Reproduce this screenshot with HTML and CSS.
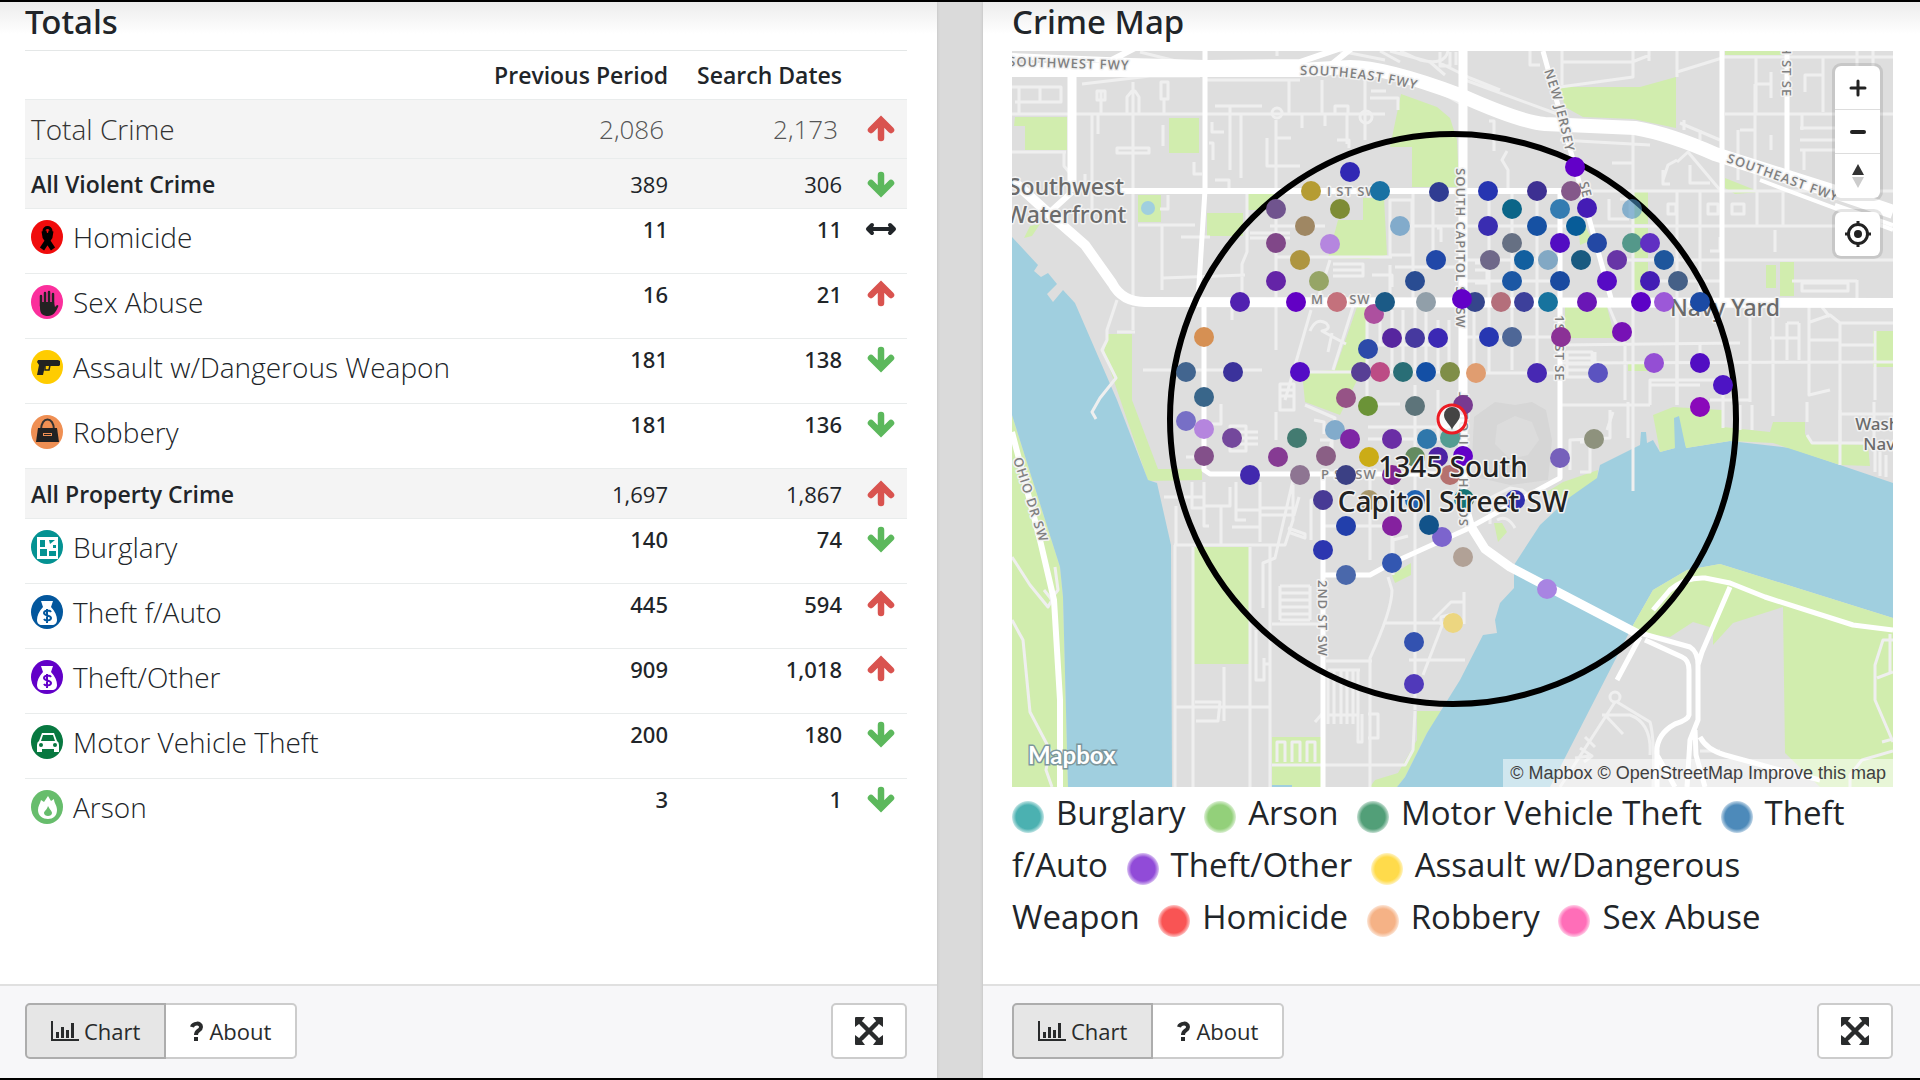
FILE: index.html
```html
<!DOCTYPE html>
<html lang="en">
<head>
    <meta charset="UTF-8">
    <meta name="viewport" content="width=device-width, initial-scale=1.0">
    <title>Crime Cards</title>
    <link rel="stylesheet" href="styles.css">
</head>

<body>
    <!-- Shared icons -->
    <svg class="sprite" width="0" height="0" aria-hidden="true">
        <symbol id="up" viewBox="0 0 28 28">
            <path d="M14 23V7M4 15L14 5l10 10" fill="none" stroke="currentColor" stroke-width="6.500" stroke-linecap="round"/>
        </symbol>
        <symbol id="down" viewBox="0 0 28 28">
            <path d="M14 5v16M4 13l10 10 10-10" fill="none" stroke="currentColor" stroke-width="6.500" stroke-linecap="round"/>
        </symbol>
        <symbol id="same" viewBox="0 0 32 28">
            <path d="M4 14h24M7 10l-4 4 4 4M25 10l4 4-4 4" fill="none" stroke="currentColor" stroke-width="4" stroke-linecap="round" stroke-linejoin="round"/>
        </symbol>
        <symbol id="bars" viewBox="0 0 28 24">
            <path d="M0 2h2v18h26v2H0zM5 13h3v6H5zM10 8h3v11h-3zM15 11h3v8h-3zM20 4h3v15h-3z" fill="currentColor"/>
        </symbol>
        <symbol id="question" viewBox="0 0 14 24">
            <path d="M2 8c1-4 9-5 9 0 0 4-5 3-5 8" fill="none" stroke="currentColor" stroke-width="4"/>
            <path d="M4 18h4v4H4z" fill="currentColor"/>
        </symbol>
        <symbol id="expand" viewBox="0 0 28 28">
            <path d="M6 6l16 16M22 6L6 22" stroke="currentColor" stroke-width="4.500"/>
            <path d="M0 1q0-1 1-1h9L7 4l1 4-4-1-4 3zM28 1q0-1-1-1h-9l3 4-1 4 4-1 4 3zM0 27q0 1 1 1h9l-3-4 1-4-4 1-4-3zM28 27q0 1-1 1h-9l3-4-1-4 4 1 4-3z" fill="currentColor"/>
        </symbol>
        <symbol id="bag" viewBox="0 0 32 34">
            <path d="M10 6h12l-2 6c4 4 6 9 6 13 0 3-2 5-5 5H11c-3 0-5-2-5-5 0-4 2-9 6-13z" fill="#fff"/>
            <path d="M20 17c-1-2-7-2-7 1s7 2 7 5-6 3-7 1M16 14v14" fill="none" stroke="currentColor" stroke-width="2"/>
        </symbol>
    </svg>

    <section class="panel">
        <div class="panel-body">
            <h2 class="ruled">Totals</h2>
            <table class="totals">
                <thead>
                    <tr>
                        <th class="name"></th>
                        <th class="previous">Previous Period</th>
                        <th>Search Dates</th>
                        <th class="trend"></th>
                    </tr>
                </thead>
                <tbody>
                    <tr class="total">
                        <td class="name">Total Crime</td><td>2,086</td><td>2,173</td>
                        <td class="trend"><svg class="red"><use href="#up"/></svg></td>
                    </tr>
                    <tr class="group">
                        <td class="name">All Violent Crime</td><td>389</td><td>306</td>
                        <td class="trend"><svg class="green"><use href="#down"/></svg></td>
                    </tr>
                    <tr class="offense">
                        <td class="name"><span class="offense-name"><svg class="badge" viewBox="0 0 32 34"><ellipse cx="16" cy="17" rx="16" ry="17" fill="#f00c0c"/><path d="M11 29L19 17l1-6M22 29L14 17l-1-6" stroke="#000" stroke-width="5" fill="none"/><circle cx="16.500" cy="11" r="3.500" fill="none" stroke="#000" stroke-width="3"/></svg>Homicide</span></td><td>11</td><td>11</td>
                        <td class="trend"><svg class="same"><use href="#same"/></svg></td>
                    </tr>
                    <tr class="offense">
                        <td class="name"><span class="offense-name"><svg class="badge" viewBox="0 0 32 34"><ellipse cx="16" cy="17" rx="16" ry="17" fill="#fb2f9c"/><path d="M10 21V11M14 18V8M18 18V7M22 18V9" stroke="#222" stroke-width="2.500" stroke-linecap="round"/><path d="M9 17h14l1 5 2-2q2 0 1 2c-2 5-5 9-10 9-5 0-8-2-8-8z" fill="#222"/></svg>Sex Abuse</span></td><td>16</td><td>21</td>
                        <td class="trend"><svg class="red"><use href="#up"/></svg></td>
                    </tr>
                    <tr class="offense">
                        <td class="name"><span class="offense-name"><svg class="badge" viewBox="0 0 32 34"><ellipse cx="16" cy="17" rx="16" ry="17" fill="#fc0"/><path d="M6 12l1-2h20l2 1v4l-1 1H14l-2 9H6l2-10z" fill="#222"/><path d="M14 16v4h4l1-5" fill="none" stroke="#222" stroke-width="1.500"/></svg>Assault w/Dangerous Weapon</span></td><td>181</td><td>138</td>
                        <td class="trend"><svg class="green"><use href="#down"/></svg></td>
                    </tr>
                    <tr class="offense">
                        <td class="name"><span class="offense-name"><svg class="badge" viewBox="0 0 32 34"><ellipse cx="16" cy="17" rx="16" ry="17" fill="#ef8f53"/><path d="M10 15c0-14 13-14 13 0" fill="none" stroke="#333" stroke-width="2"/><path d="M7 13h19l2 14H5z" fill="#222"/><path d="M12 18h9v3h-9z" fill="#ef8f53"/><path d="M13 19h7v1h-7z" fill="#222"/></svg>Robbery</span></td><td>181</td><td>136</td>
                        <td class="trend"><svg class="green"><use href="#down"/></svg></td>
                    </tr>
                    <tr class="group">
                        <td class="name">All Property Crime</td><td>1,697</td><td>1,867</td>
                        <td class="trend"><svg class="red"><use href="#up"/></svg></td>
                    </tr>
                    <tr class="offense">
                        <td class="name"><span class="offense-name"><svg class="badge" viewBox="0 0 32 34"><ellipse cx="16" cy="17" rx="16" ry="17" fill="#049292"/><path d="M6 7h21v22H6z" fill="#fff"/><path d="M9 10h5v7H9zM9 19h7v7H9zM18 10h6l-5 4zM18 21h7v5h-7zM22 15h3v3h-3z" fill="#049292"/></svg>Burglary</span></td><td>140</td><td>74</td>
                        <td class="trend"><svg class="green"><use href="#down"/></svg></td>
                    </tr>
                    <tr class="offense">
                        <td class="name"><span class="offense-name"><svg class="badge blue" viewBox="0 0 32 34"><ellipse cx="16" cy="17" rx="16" ry="17" fill="currentColor"/><use href="#bag"/></svg>Theft f/Auto</span></td><td>445</td><td>594</td>
                        <td class="trend"><svg class="red"><use href="#up"/></svg></td>
                    </tr>
                    <tr class="offense">
                        <td class="name"><span class="offense-name"><svg class="badge purple" viewBox="0 0 32 34"><ellipse cx="16" cy="17" rx="16" ry="17" fill="currentColor"/><use href="#bag"/></svg>Theft/Other</span></td><td>909</td><td>1,018</td>
                        <td class="trend"><svg class="red"><use href="#up"/></svg></td>
                    </tr>
                    <tr class="offense">
                        <td class="name"><span class="offense-name"><svg class="badge" viewBox="0 0 32 34"><ellipse cx="16" cy="17" rx="16" ry="17" fill="#077840"/><path d="M11 8h12l3 8q2 1 2 4v7h-5v-3H11v3H6v-7q0-3 2-4zM12 10l-2 6h14l-2-6z" fill="#fff" fill-rule="evenodd"/><circle cx="10" cy="20" r="2" fill="#077840"/><circle cx="24" cy="20" r="2" fill="#077840"/></svg>Motor Vehicle Theft</span></td><td>200</td><td>180</td>
                        <td class="trend"><svg class="green"><use href="#down"/></svg></td>
                    </tr>
                    <tr class="offense">
                        <td class="name"><span class="offense-name"><svg class="badge" viewBox="0 0 32 34"><ellipse cx="16" cy="17" rx="16" ry="17" fill="#67bd6c"/><path d="M17 6l3 5 3-2c0 4 3 6 3 11 0 6-4 9-9 9S7 26 7 20c0-4 2-6 3-10l3 2z" fill="#fff"/><path d="M17 16c2 4 4 5 4 7s-2 3-4 3-4-1-4-3 3-3 4-7z" fill="#67bd6c"/></svg>Arson</span></td><td>3</td><td>1</td>
                        <td class="trend"><svg class="green"><use href="#down"/></svg></td>
                    </tr>
                </tbody>
            </table>
        </div>
        <div class="panel-footer">
            <div class="btn-group">
                <button class="btn active" type="button"><svg class="bars"><use href="#bars"/></svg> Chart</button>
                <button class="btn" type="button"><svg class="question"><use href="#question"/></svg> About</button>
            </div>
            <button class="btn btn-expand" type="button" aria-label="Expand"><svg><use href="#expand"/></svg></button>
        </div>
    </section>

    <section class="panel panel-map">
        <div class="panel-body">
            <h2>Crime Map</h2>
            <div class="map">
                <svg class="map-canvas" viewBox="1012 51 881 736" role="img" aria-label="Crime near 1345 South Capitol Street SW">
                    <rect class="land" x="1012" y="51" width="881" height="736"/>

                    <!-- Parks -->
                    <g class="park">
                        <path d="M1012 415L1060 567L1063 597L1068 787H1012z"/>
                        <path d="M1108 334H1132V400L1158 469H1202V480L1148 481L1104 352z"/>
                        <path d="M1015 117H1067V150H1025V126H1014z"/>
                        <path d="M1169 118h30v35h-30zM1138 195h23v27h-23zM1207 213h36v23h-36z"/>
                        <path d="M1024 238l6-12 10-2-8 12zM1247 194h28l-13 16h-15z"/>
                        <path d="M1401 94L1437 107L1450 118L1457 140L1459 187H1412V147H1390z"/>
                        <path d="M1363 198H1384L1387 255L1368 259L1328 258L1338 220H1363z"/>
                        <path d="M1357 307H1367V360L1340 415L1305 402L1302 372L1335 370z"/>
                        <path d="M1560 87H1640L1676 77V128L1633 119L1583 117L1565 107z"/>
                        <path d="M1725 51h57v4h-57zM1725 178L1760 192L1735 194L1725 188z"/>
                        <path d="M1634 192h14v32h-14zM1634 228h14v30h-14zM1634 262h14v28h-14z"/>
                        <path d="M1780 262h14v34h-14zM1766 265h10v23h-10zM1873 331h20v36h-20zM1628 364h20v7h-20z"/>
                        <path d="M1565 307H1607L1615 338H1565zM1579 230L1585 225L1592 240L1580 245z"/>
                        <path d="M1194 547h55v117h-55zM1272 737h51v50h-51z"/>
                        <path d="M1417 711H1443L1427 733L1405 777L1397 787H1370L1375 780L1398 773L1417 740z"/>
                        <path d="M1494 523h8l5 9-9 10zM1392 575L1411 563V575L1395 583z"/>
                        <path d="M1547 492L1563 482L1598 470L1597 480L1557 507z"/>
                    </g>

                    <!-- Ballpark -->
                    <path d="M1474 417L1495 402L1515 405L1532 402L1546 410L1552 440L1548 480L1510 485L1480 478L1472 460z" fill="#d6d6d6"/>
                    <path d="M1497 425L1515 416L1532 422L1539 440L1528 455L1510 459L1495 444z" fill="#dcdcdc"/>

                    <!-- Rivers -->
                    <g class="water">
                        <path d="M1012 237L1038 265L1034 271L1041 277L1048 273L1057 284L1047 294L1053 302L1063 290L1075 303L1117 400L1148 480L1157 483L1171 545L1172 787H1068L1063 597L1060 567L1012 415z"/>
                        <path d="M1600 465L1640 445L1641 432H1646L1647 443L1653 440L1660 452L1675 448L1677 417L1686 448L1730 441L1790 448L1893 483V618L1720 564L1687 570L1653 590L1632 627L1550 787H1397L1405 777L1427 733L1460 680L1483 635L1497 633L1495 620L1500 603L1514 588V565L1540 525L1570 497L1597 478z"/>
                        <circle cx="1148" cy="208" r="7"/>
                        <path d="M1272 785h20v2h-20z"/>
                    </g>
                    <g class="park">
                        <path d="M1653 415L1673 407L1722 410L1723 427L1770 432L1773 422H1805V434L1812 443L1868 445L1870 466L1840 465L1773 443L1730 441L1686 448L1677 417L1675 448L1660 452z"/>
                        <path d="M1632 627L1653 590L1687 570L1720 564L1893 618V787H1820L1785 753L1783 607L1733 623L1713 645V628L1693 622L1670 637L1640 633z"/>
                    </g>
                    <path class="water" d="M1674 418L1679 416L1686 449L1675 450z"/>

                    <!-- Side streets -->
                    <g class="street">
                        <path d="M1012 114H1385M1012 87H1061V102H1015M1040 87V102M1019 87V114M1012 152H1066M1082 84L1150 76H1200M1101 92V114M1097 91h8v9h-8zM1127 114V97l5-6h3l4 6v17M1161 82h7v17h-7zM1164 99v15M1092 114V210M1098 114V134M1133 82V290M1133 114V300M1163 125V146M1117 148h32v5h-32zM1064 152v14l10 12M1085 192v-18M1168 195v14h-8M1138 225H1195M1162 225V290M1133 225v3M1181 237H1210"/>
                        <path d="M1207 80H1300M1215 106H1262M1230 106V170M1241 114v64M1212 122v10h12M1209 143h4v17M1194 162v12h8M1215 180h14v12M1289 80V114M1322 80V114M1335 114V106h13v8M1365 70V140M1370 98H1398V110M1371 91H1386M1347 114v30M1302 114v14M1325 114v12M1276 120V350M1276 138H1291M1267 138V166H1300M1337 140h12v8"/>
                        <circle cx="1277" cy="113" r="5"/><circle cx="1366" cy="117" r="6"/>
                        <path d="M1247 192v60l-5 12v38M1163 278L1245 275M1270 226H1325M1250 233h40M1250 238h40M1276 257H1392M1390 265V300M1372 275h20v12M1330 260L1317 302M1333 264h30v12h-30M1333 270h30M1390 200h22v55h-22zM1390 226H1460M1413 192V300M1433 192V256M1395 267H1455M1437 228h4v14"/>
                        <path d="M1117 300L1107 330V340L1102 350L1116 378L1100 398L1092 412L1096 419M1117 332h18M1133 307V330M1143 370H1262M1232 302v18M1311 310L1285 400M1303 360M1353 307L1333 370M1310 331q6-14 16-8q6 6-4 8L1346 344M1332 333L1328 352M1276 412V440M1280 384h14v26h-14zM1280 390h14M1280 396h14"/>
                        <path d="M1367 320V400M1380 310V345M1392 310V370M1403 310V370M1415 302V370M1426 310V370M1438 320V370M1449 320V370M1303 372H1463M1375 345H1450M1368 404H1400M1368 427H1455M1368 439H1455M1415 385V475M1438 390V440M1305 405L1335 418L1330 450M1314 420l10 2v12M1320 440h12v14"/>
                        <path d="M1221 404v20h-14M1230 426h16v25h-16zM1230 432h28M1230 438h28M1230 444h28M1186 457H1204"/>
                        <path d="M1164 497H1204M1174 545H1285L1293 520V485M1176 506v38M1192 482v26h12V482M1230 487V506H1204v20h5M1221 506V545M1236 482v38h10M1236 510h24M1260 482v60M1232 527h28M1260 508H1294M1293 480l-18 78-12 5v45M1288 532l17 6v-4l-17-6M1260 515h34l5-18M1323 500h-12v40"/>
                        <path d="M1175 545V787M1193 547V787M1250 547V787M1270 545V787M1174 707H1270M1195 702h25l-2 19h-22M1224 667v54M1256 630V680h8v-22M1263 664h8M1280 586h30M1280 593h30M1280 600h30M1280 607h30M1280 614h30M1280 620h30M1280 586v34M1310 586v34M1272 624H1323M1326 661H1372M1272 765H1405L1413 750L1415 711"/>
                        <path d="M1277 762V742h8v20M1292 762V742h8v20M1307 762V742h8v20M1328 670h32M1328 670v54M1334 670v54M1341 670v54M1347 670v54M1353 670v54M1358 670v72h4v-28M1328 715h30M1368 714h10v24h-10M1315 722l7-8"/>
                        <path d="M1370 475V560M1392 475V570M1415 475V710M1388 577L1392 590Q1392 610 1370 658V787M1385 623H1463M1409 660H1465M1323 526H1400M1443 623L1423 675M1433 620l18-18h12M1464 592v32M1441 625v-8l12-3M1393 575V540l15-4"/>
                        <path d="M1490 506v18M1490 498l20-10 12 2 10 8M1497 520q10-6 18 8M1465 373H1560M1466 337H1560M1465 281H1560M1465 226H1570M1465 260H1540M1489 191V373M1512 191V370M1537 191V370M1475 263h12v20h-12M1475 270h12M1508 191V170l-6-10 5-9M1489 121h5v30M1474 302v70"/>
                        <path d="M1463 105L1440 92M1465 80L1560 115M1440 63L1470 78L1500 90M1440 52v14h10V52M1456 52V65M1530 51v14h10M1562 51V85M1562 62H1632L1650 55M1649 51v10M1677 51V77M1677 72L1722 58M1633 51V77L1560 87M1722 57H1893M1756 58V115M1756 84H1772M1771 72v26M1805 92V75h18M1823 58V112M1857 51V66M1873 51V66"/>
                        <path d="M1725 114H1893M1755 84V190M1740 130h14M1738 130v50M1802 115V130M1800 128H1850M1804 150V170M1800 150H1840M1771 135v15M1800 140H1835M1560 140L1650 145M1680 123L1720 140M1684 120V130M1700 130v10M1612 163h20M1633 128V190M1663 180l5-15 9-5M1677 162L1688 152L1720 190M1690 165v18h20M1663 170v14h7"/>
                        <path d="M1465 191H1893M1590 226H1893M1615 260H1893M1633 191v300M1677 191v214M1700 191v110M1609 199v20h20M1620 199h10v20M1668 204h8v10h-8zM1708 204h10v10h-10zM1732 204h12v10h-12zM1720 237v14h-10M1757 192V225M1783 192V225M1700 260V302M1775 230v22M1857 280v22M1802 283h46v8h-46zM1792 281H1857M1650 281H1722"/>
                        <path d="M1607 302L1625 345V400M1677 304V405M1560 345L1740 343M1560 363L1893 362M1750 307V402M1773 307V400M1787 323V360M1799 323V360M1787 323h12M1809 307V395L1830 390M1810 322L1830 315L1840 323V443M1840 345H1875M1840 323H1893M1875 331V400M1770 338H1800M1808 340h32M1822 307l8 10"/>
                        <path d="M1567 352h25v25h-25zM1567 358h25M1567 364h25M1567 370h25M1595 352v22M1560 405H1650M1628 402V438M1610 410V438L1570 440V470M1580 442h10v30h-10M1650 405V380H1723V425M1723 410V428M1740 405v25M1752 405v25M1710 400h40M1773 400V416M1807 402v20M1840 410V465M1875 450v22M1880 452v24M1886 455v22M1807 435L1812 443H1893M1840 414H1893M1874 402V445"/>
                        <path d="M1650 385H1700M1700 343V370M1613 412L1607 430"/>
                        <path d="M1615 702L1560 787M1617 702L1650 722Q1655 740 1653 787M1602 715h28q22 8 20 40M1606 716l17 18M1585 737l10 10M1580 748l12 8-8 6M1575 758l14-2"/>
                        <circle cx="1615" cy="697" r="5"/>
                        <path d="M1012 557L1030 585L1048 607L1052 600L1044 590M1055 567L1058 590L1050 600M1012 620L1023 640L1030 712L1050 750L1046 770L1052 787M1893 640H1883L1875 665V700L1893 742M1877 678L1893 672M1882 742l11-3M1890 634v40M1893 751L1862 760L1850 775V787M1700 751h20"/>
                        <path d="M1380 51L1400 62M1140 52L1180 62M1340 51L1385 60M1390 51L1430 62L1445 75M1400 51L1420 60Q1445 66 1448 51M1277 51v5"/>
                    </g>

                    <!-- Main roads -->
                    <g class="road">
                        <path d="M1012 56L1130 61L1205 63L1300 62L1350 45M1100 66L1135 48M1332 64L1352 48M1072 192L1050 212M1120 191H1575" stroke-width="6"/>
                        <path d="M1072 70V192M1463 51V470" stroke-width="9"/>
                        <path d="M1205 51V190L1198 300M1204 302V470L1210 474H1460M1323 474V787M1560 193V478L1465 530L1392 563L1370 575H1323M1722 51V300M1787 51V170M1543 51L1575 167L1612 302" stroke-width="5"/>
                        <path d="M1463 470V500L1470 525L1485 549L1510 567L1642 636" stroke-width="9"/>
                        <path d="M1012 180L1045 210L1085 245L1112 283Q1122 302 1145 302L1893 303" stroke-width="10"/>
                        <path d="M1012 70H1300L1350 67Q1385 67 1460 95Q1520 122 1545 124L1635 128Q1670 134 1715 154L1835 192L1893 212" stroke-width="14"/>
                        <path d="M1760 180L1893 230M1835 205L1893 225" stroke-width="4"/>
                        <path d="M1012 432L1040 540L1054 600L1060 700V787" stroke-width="6"/>
                        <path d="M1640 633L1690 647Q1698 652 1698 665V720L1690 740L1687 787M1645 640L1682 657Q1689 660 1689 670V715Q1688 720 1675 724Q1655 735 1657 755L1675 787M1657 750V787M1695 730L1696 755L1705 787M1640 637L1617 680M1653 610L1670 590Q1685 577 1705 578L1730 583L1765 597L1853 625L1893 630M1730 587L1702 652L1698 665M1700 737Q1707 750 1725 755L1780 770L1820 780" stroke-width="5"/>
                    </g>

                    <!-- Street names -->
                    <g class="street-name">
                        <path id="fwy-w" d="M1008 66L1135 70" fill="none"/>
                        <path id="fwy-m" d="M1300 75Q1365 75 1425 92" fill="none"/>
                        <path id="fwy-e" d="M1726 162L1846 205" fill="none"/>
                        <path id="ohio" d="M1013 459L1045 560" fill="none"/>
                        <path id="jersey" d="M1544 71Q1558 110 1568 165" fill="none"/>
                        <text><textPath href="#fwy-w">SOUTHWEST FWY</textPath></text>
                        <text><textPath href="#fwy-m">SOUTHEAST FWY</textPath></text>
                        <text><textPath href="#fwy-e">SOUTHEAST FWY</textPath></text>
                        <text><textPath href="#ohio">OHIO DR SW</textPath></text>
                        <text><textPath href="#jersey">NEW JERSEY</textPath></text>
                        <text x="1327" y="196">I ST SW</text>
                        <text x="1311" y="304">M ST SW</text>
                        <text x="1321" y="479">P ST SW</text>
                        <text transform="translate(1456 168) rotate(90)">SOUTH CAPITOL ST SW</text>
                        <text transform="translate(1468 526) rotate(-90)">SOUTH CAPITOL ST</text>
                        <text transform="translate(1555 315) rotate(90)">1ST ST SE</text>
                        <text transform="translate(1782 28) rotate(90)">4TH ST SE</text>
                        <text transform="translate(1318 580) rotate(90)">2ND ST SW</text>
                        <text transform="translate(1579 183) rotate(75)">SE</text>
                    </g>
                    <g class="place-name">
                        <text x="1066" y="195">Southwest</text>
                        <text x="1066" y="223">Waterfront</text>
                        <text x="1725" y="316">Navy Yard</text>
                        <text class="small" x="1904" y="430">Washington</text>
                        <text class="small" x="1904" y="450">Navy Yard</text>
                    </g>

                    <ellipse cx="1453" cy="419" rx="283" ry="285" fill="none" stroke="#000" stroke-width="6"/>

                    <!-- Incidents -->
                    <g class="incidents">
                        <circle cx="1350" cy="172" fill="#3128b4"/>
                        <circle cx="1311" cy="191" fill="#b59c33"/>
                        <circle cx="1380" cy="191" fill="#1971a3"/>
                        <circle cx="1439" cy="192" fill="#303c92"/>
                        <circle cx="1276" cy="209" fill="#70548e"/>
                        <circle cx="1340" cy="209" fill="#7e8c35"/>
                        <circle cx="1305" cy="226" fill="#9f8763"/>
                        <circle cx="1400" cy="226" fill="#82abcb"/>
                        <circle cx="1276" cy="243" fill="#804788"/>
                        <circle cx="1330" cy="244" fill="#b586df"/>
                        <circle cx="1300" cy="260" fill="#ae953f"/>
                        <circle cx="1436" cy="260" fill="#2148a8"/>
                        <circle cx="1276" cy="281" fill="#6424a7"/>
                        <circle cx="1319" cy="281" fill="#96a566"/>
                        <circle cx="1415" cy="281" fill="#294c92"/>
                        <circle cx="1240" cy="302" fill="#5121b0"/>
                        <circle cx="1296" cy="302" fill="#6200c4"/>
                        <circle cx="1337" cy="302" fill="#c4717c"/>
                        <circle cx="1374" cy="314" fill="#ad509f"/>
                        <circle cx="1385" cy="302" fill="#1b5a86"/>
                        <circle cx="1426" cy="302" fill="#919fa9"/>
                        <circle cx="1204" cy="337" fill="#d69053"/>
                        <circle cx="1392" cy="338" fill="#57269f"/>
                        <circle cx="1415" cy="338" fill="#46399f"/>
                        <circle cx="1438" cy="338" fill="#3b28b4"/>
                        <circle cx="1368" cy="349" fill="#2c4aa9"/>
                        <circle cx="1186" cy="372" fill="#42658f"/>
                        <circle cx="1233" cy="372" fill="#3b329b"/>
                        <circle cx="1300" cy="372" fill="#540cc5"/>
                        <circle cx="1380" cy="372" fill="#bc4c85"/>
                        <circle cx="1361" cy="372" fill="#573f95"/>
                        <circle cx="1403" cy="372" fill="#296e76"/>
                        <circle cx="1426" cy="372" fill="#134fa5"/>
                        <circle cx="1450" cy="372" fill="#7f8e47"/>
                        <circle cx="1476" cy="373" fill="#e09d70"/>
                        <circle cx="1204" cy="397" fill="#39668a"/>
                        <circle cx="1346" cy="398" fill="#965386"/>
                        <circle cx="1368" cy="406" fill="#6b9337"/>
                        <circle cx="1415" cy="406" fill="#5d747a"/>
                        <circle cx="1463" cy="405" fill="#783a90"/>
                        <circle cx="1335" cy="430" fill="#82abcb"/>
                        <circle cx="1350" cy="439" fill="#7e26a5"/>
                        <circle cx="1392" cy="439" fill="#6a2ea5"/>
                        <circle cx="1427" cy="439" fill="#2f77ab"/>
                        <circle cx="1450" cy="438" fill="#549c92"/>
                        <circle cx="1186" cy="421" fill="#776fc6"/>
                        <circle cx="1204" cy="429" fill="#b585de"/>
                        <circle cx="1232" cy="438" fill="#74489c"/>
                        <circle cx="1204" cy="456" fill="#83508a"/>
                        <circle cx="1297" cy="438" fill="#437b71"/>
                        <circle cx="1278" cy="457" fill="#863b93"/>
                        <circle cx="1250" cy="475" fill="#4129ae"/>
                        <circle cx="1326" cy="456" fill="#8a5f85"/>
                        <circle cx="1369" cy="457" fill="#cbac16"/>
                        <circle cx="1415" cy="457" fill="#648b60"/>
                        <circle cx="1438" cy="457" fill="#4d22a5"/>
                        <circle cx="1463" cy="456" fill="#6200c8"/>
                        <circle cx="1300" cy="475" fill="#8e7592"/>
                        <circle cx="1346" cy="475" fill="#3b4084"/>
                        <circle cx="1392" cy="475" fill="#812490"/>
                        <circle cx="1450" cy="475" fill="#b5716f"/>
                        <circle cx="1323" cy="500" fill="#473a95"/>
                        <circle cx="1369" cy="500" fill="#a8986c"/>
                        <circle cx="1415" cy="500" fill="#1f62b3"/>
                        <circle cx="1464" cy="499" fill="#137474"/>
                        <circle cx="1515" cy="500" fill="#2f2fae"/>
                        <circle cx="1346" cy="526" fill="#223fab"/>
                        <circle cx="1392" cy="526" fill="#85219f"/>
                        <circle cx="1442" cy="537" fill="#7c64cd"/>
                        <circle cx="1429" cy="525" fill="#12538a"/>
                        <circle cx="1463" cy="557" fill="#b1a196"/>
                        <circle cx="1323" cy="550" fill="#2c36b0"/>
                        <circle cx="1392" cy="563" fill="#3357b1"/>
                        <circle cx="1346" cy="575" fill="#4a68ab"/>
                        <circle cx="1547" cy="589" fill="#a884e2"/>
                        <circle cx="1560" cy="458" fill="#7660bb"/>
                        <circle cx="1594" cy="439" fill="#8e927d"/>
                        <circle cx="1414" cy="642" fill="#3352b0"/>
                        <circle cx="1414" cy="684" fill="#5039ba"/>
                        <circle cx="1453" cy="623" fill="#ecd680"/>
                        <circle cx="1575" cy="167" fill="#6200c8"/>
                        <circle cx="1488" cy="191" fill="#2635b1"/>
                        <circle cx="1537" cy="191" fill="#3d3092"/>
                        <circle cx="1571" cy="191" fill="#84588a"/>
                        <circle cx="1512" cy="209" fill="#0a6588"/>
                        <circle cx="1560" cy="209" fill="#347cb1"/>
                        <circle cx="1587" cy="208" fill="#441cb5"/>
                        <circle cx="1632" cy="209" fill="#4a8fc0" fill-opacity=".6"/>
                        <circle cx="1488" cy="226" fill="#3a2db1"/>
                        <circle cx="1537" cy="226" fill="#1651a3"/>
                        <circle cx="1576" cy="226" fill="#075c98"/>
                        <circle cx="1512" cy="243" fill="#667083"/>
                        <circle cx="1560" cy="243" fill="#520dc2"/>
                        <circle cx="1597" cy="243" fill="#2348a4"/>
                        <circle cx="1632" cy="243" fill="#54988a"/>
                        <circle cx="1650" cy="243" fill="#6030c2"/>
                        <circle cx="1490" cy="260" fill="#6f6889"/>
                        <circle cx="1524" cy="260" fill="#125f9f"/>
                        <circle cx="1548" cy="260" fill="#82a8c4"/>
                        <circle cx="1581" cy="260" fill="#195a80"/>
                        <circle cx="1617" cy="260" fill="#6735a6"/>
                        <circle cx="1664" cy="260" fill="#1e569c"/>
                        <circle cx="1512" cy="281" fill="#1b57a4"/>
                        <circle cx="1560" cy="281" fill="#1a4aa0"/>
                        <circle cx="1607" cy="281" fill="#560bc4"/>
                        <circle cx="1650" cy="281" fill="#431eb4"/>
                        <circle cx="1678" cy="281" fill="#456087"/>
                        <circle cx="1475" cy="302" fill="#35458c"/>
                        <circle cx="1462" cy="299" fill="#6200c8"/>
                        <circle cx="1501" cy="302" fill="#b46f7b"/>
                        <circle cx="1524" cy="302" fill="#3d409b"/>
                        <circle cx="1548" cy="302" fill="#17739e"/>
                        <circle cx="1587" cy="302" fill="#6a16b6"/>
                        <circle cx="1641" cy="302" fill="#5c02c6"/>
                        <circle cx="1664" cy="302" fill="#9c58d8"/>
                        <circle cx="1700" cy="302" fill="#1b4aa4"/>
                        <circle cx="1622" cy="332" fill="#7712b5"/>
                        <circle cx="1489" cy="337" fill="#2737b2"/>
                        <circle cx="1512" cy="337" fill="#4e6797"/>
                        <circle cx="1561" cy="337" fill="#8b3196"/>
                        <circle cx="1654" cy="363" fill="#944ed4"/>
                        <circle cx="1700" cy="363" fill="#520dc2"/>
                        <circle cx="1537" cy="373" fill="#4728b3"/>
                        <circle cx="1598" cy="373" fill="#5b53c0"/>
                        <circle cx="1723" cy="385" fill="#4d14c4"/>
                        <circle cx="1700" cy="407" fill="#8a08ba"/>
                    </g>

                    <circle cx="1452" cy="419" r="14" fill="#fff" fill-opacity=".85" stroke="#ec1c24" stroke-width="3"/>
                    <path d="M1452 430c-1-5-8-9-8-15a8 8 0 0 1 16 0c0 6-7 10-8 15z" fill="#444"/>
                    <g class="address">
                        <text x="1453" y="477">1345 South</text>
                        <text x="1453" y="512">Capitol Street SW</text>
                    </g>
                </svg>

                <div class="map-controls">
                    <div class="control-group">
                        <button type="button" aria-label="Zoom in"><svg viewBox="0 0 20 20"><path d="M10 3v14M3 10h14" stroke="#222" stroke-width="3" stroke-linecap="round"/></svg></button>
                        <button type="button" aria-label="Zoom out"><svg viewBox="0 0 20 20"><path d="M4 10h12" stroke="#222" stroke-width="4" stroke-linecap="round"/></svg></button>
                        <button type="button" aria-label="Reset north"><svg viewBox="0 0 20 28"><path d="M10 2l6 11H4z" fill="#333"/><path d="M10 26l6-11H4z" fill="#ccc"/></svg></button>
                    </div>
                    <div class="control-group">
                        <button type="button" aria-label="Find my location"><svg class="locate" viewBox="0 0 28 28"><circle cx="14" cy="14" r="9.500" fill="none" stroke="#222" stroke-width="3"/><circle cx="14" cy="14" r="4" fill="#222"/><path d="M14 1v4M14 23v4M1 14h4M23 14h4" stroke="#222" stroke-width="3"/></svg></button>
                    </div>
                </div>
                <a class="map-logo" href="#">Mapbox</a>
                <div class="attribution"><a href="#">© Mapbox</a> <a href="#">© OpenStreetMap</a> <a href="#">Improve this map</a></div>
            </div>

            <div class="legend">
                <span class="dot burglary"></span><span>Burglary</span>
                <span class="dot arson"></span><span>Arson</span>
                <span class="dot vehicle"></span><span>Motor Vehicle Theft</span>
                <span class="dot auto"></span><span>Theft f/Auto</span>
                <span class="dot other"></span><span>Theft/Other</span>
                <span class="dot assault"></span><span>Assault w/Dangerous Weapon</span>
                <span class="dot homicide"></span><span>Homicide</span>
                <span class="dot robbery"></span><span>Robbery</span>
                <span class="dot abuse"></span><span>Sex Abuse</span>
            </div>
        </div>
        <div class="panel-footer">
            <div class="btn-group">
                <button class="btn active" type="button"><svg class="bars"><use href="#bars"/></svg> Chart</button>
                <button class="btn" type="button"><svg class="question"><use href="#question"/></svg> About</button>
            </div>
            <button class="btn btn-expand" type="button" aria-label="Expand"><svg><use href="#expand"/></svg></button>
        </div>
    </section>
</body>
</html>
```
FILE: styles.css
```css
* {
    box-sizing: border-box;
}

body {
    margin: 0;
    min-height: 100vh;
    display: grid;
    grid-template-columns: 1fr 1fr;
    column-gap: 46px;
    border-top: 2px solid #000;
    border-bottom: 2px solid #000;
    background-color: #dadada;
    color: #212529;
    font-family: "Open Sans", "Noto Sans", sans-serif;
}

.sprite {
    position: absolute;
}

.panel {
    display: flex;
    flex-direction: column;
    background: #fff linear-gradient(#ececec, #fff 32px) no-repeat;
    box-shadow: 0 0 3px #bbb;
}

.panel-body {
    flex: 1;
    padding: 0 30px 0 25px;
}

.panel-map .panel-body {
    padding: 0 27px 0 29px;
}

h2 {
    margin: 0;
    height: 49px;
    font-family: "Noto Sans", sans-serif;
    font-size: 33px;
    line-height: 40px;
    font-weight: 500;
}

.ruled {
    border-bottom: 1px solid #e4e7e7;
}

/* Totals table */
.totals {
    width: 100%;
    border-collapse: separate;
    border-spacing: 0;
    table-layout: fixed;
    font-size: 22px;
    line-height: 32px;
}

.totals th,
.totals td {
    padding: 0 13px 0 0;
    text-align: right;
    border-bottom: 1px solid #e9ecec;
}

.totals th {
    width: 174px;
    height: 49px;
    font-size: 23px;
    font-weight: 600;
    white-space: nowrap;
}

.totals .previous {
    width: 200px;
}

.totals .name {
    width: auto;
    padding: 0 0 0 6px;
    text-align: left;
}

.totals .trend {
    width: 52px;
    padding: 0;
    text-align: center;
}

.trend svg {
    display: block;
    width: 28px;
    height: 28px;
    margin: 0 auto;
}

.trend .same {
    width: 32px;
}

.red {
    color: #d9534f;
}

.green {
    color: #5cb85c;
}

.total td,
.group td {
    background-color: #f4f4f4;
}

.total td {
    height: 59px;
    padding-right: 17px;
    color: #555;
    font-size: 26px;
    font-weight: 300;
}

.total .name {
    color: #333;
    font-size: 28px;
}

.group td {
    height: 50px;
}

.group .name {
    font-size: 23px;
    font-weight: 600;
}

.offense td {
    height: 65px;
    padding-top: 4px;
    vertical-align: top;
    font-family: "Noto Sans", sans-serif;
    font-weight: 500;
}

.offense .name {
    padding-top: 10px;
    font-family: inherit;
    font-size: 28px;
    font-weight: 300;
}

.offense .trend {
    padding-top: 6px;
}

.totals tr:last-child td {
    border-bottom: 0;
}

.offense-name {
    display: flex;
    align-items: center;
    gap: 10px;
    line-height: 36px;
    white-space: nowrap;
}

.badge {
    width: 32px;
    height: 34px;
}

.blue {
    color: #03579d;
}

.purple {
    color: #6200c8;
}

/* Map */
.map {
    position: relative;
}

.map-canvas {
    display: block;
    width: 100%;
    height: auto;
}

.land {
    fill: #dedede;
}

.park {
    fill: #d1edae;
}

.water {
    fill: #a0cfdf;
}

.street,
.road {
    fill: none;
    stroke: #efefef;
    stroke-width: 3px;
    stroke-linejoin: round;
}

.road {
    stroke: #fff;
}

.street-name {
    font-size: 13px;
    font-weight: 600;
    letter-spacing: 1px;
    fill: #808080;
}

.street-name text,
.place-name text,
.address text {
    paint-order: stroke;
    stroke: #f2f2f2;
    stroke-width: 3px;
    stroke-linejoin: round;
}

.place-name {
    font-family: "Noto Sans", sans-serif;
    font-size: 23px;
    font-weight: 500;
    fill: #6b6b6b;
    text-anchor: middle;
}

.place-name .small {
    font-size: 17px;
}

.incidents circle {
    r: 10px;
}

.address {
    font-family: "Noto Sans", sans-serif;
    font-size: 28px;
    font-weight: 500;
    fill: #222;
    text-anchor: middle;
}

.map-controls {
    position: absolute;
    top: 15px;
    right: 13px;
    display: flex;
    flex-direction: column;
    gap: 14px;
}

.control-group {
    width: 45px;
    border-radius: 6px;
    background-color: #fff;
    box-shadow: 0 0 0 3px rgba(0, 0, 0, 0.1);
    overflow: hidden;
}

.control-group button {
    display: flex;
    align-items: center;
    justify-content: center;
    width: 100%;
    height: 44px;
    padding: 0;
    border: 0;
    border-bottom: 1px solid #ddd;
    background: none;
}

.control-group button:last-child {
    border-bottom: 0;
}

.control-group svg {
    width: 20px;
    height: 28px;
}

.control-group .locate {
    width: 28px;
}

.map-logo {
    position: absolute;
    left: 16px;
    bottom: 15px;
    color: #fff;
    font-family: Lato, sans-serif;
    font-size: 24px;
    font-weight: 700;
    line-height: 34px;
    text-decoration: none;
    paint-order: stroke;
    -webkit-text-stroke: 3px #7c969c;
}

.attribution {
    position: absolute;
    right: 0;
    bottom: 0;
    padding: 0 7px;
    background-color: rgba(255, 255, 255, 0.5);
    font-family: "Liberation Sans", Arial, sans-serif;
    font-size: 18px;
    line-height: 28px;
}

.attribution a {
    color: #404040;
    text-decoration: none;
}

/* Legend */
.legend {
    padding-right: 24px;
    font-size: 33px;
    line-height: 52px;
}

.dot {
    display: inline-block;
    width: 32px;
    height: 32px;
    margin: 0 12px 0 10px;
    border-radius: 50%;
    vertical-align: -8px;
}

.dot:first-child {
    margin-left: 0;
}

.burglary { background: radial-gradient(closest-side, #4bb1b1 75%, #4bb1b155); }
.arson { background: radial-gradient(closest-side, #93d07a 75%, #93d07a55); }
.vehicle { background: radial-gradient(closest-side, #529f78 75%, #529f7855); }
.auto { background: radial-gradient(closest-side, #4d8aba 75%, #4d8aba55); }
.other { background: radial-gradient(closest-side, #914bd8 75%, #914bd855); }
.assault { background: radial-gradient(closest-side, #ffdb4b 75%, #ffdb4b55); }
.homicide { background: radial-gradient(closest-side, #f95454 75%, #f9545455); }
.robbery { background: radial-gradient(closest-side, #f5b286 75%, #f5b28655); }
.abuse { background: radial-gradient(closest-side, #ff6eb8 75%, #ff6eb855); }

/* Footer */
.panel-footer {
    display: flex;
    justify-content: space-between;
    padding: 17px 30px 19px 25px;
    border-top: 2px solid #e0e0e0;
    background-color: #f7f7f9;
}

.panel-map .panel-footer {
    padding-right: 27px;
    padding-left: 29px;
}

.btn-group {
    display: flex;
}

.btn {
    display: flex;
    align-items: center;
    gap: 5px;
    height: 56px;
    padding: 0 24px;
    border: 2px solid #ccc;
    border-radius: 5px;
    background-color: #fff;
    color: #292b2c;
    font-family: inherit;
    font-size: 22px;
}

.btn-group .btn:first-child {
    border-radius: 5px 0 0 5px;
}

.btn-group .btn:last-child {
    border-left: 0;
    border-radius: 0 5px 5px 0;
}

.btn.active {
    border-color: #adadad;
    background-color: #e6e6e6;
}

.btn .bars {
    width: 28px;
    height: 24px;
}

.btn .question {
    width: 14px;
    height: 24px;
}

.btn-expand {
    padding: 0 22px;
}

.btn-expand svg {
    width: 28px;
    height: 28px;
}
```
